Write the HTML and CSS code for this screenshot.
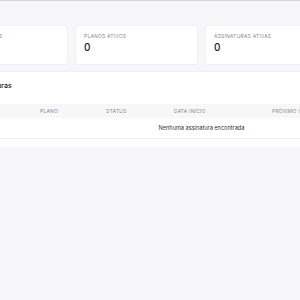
FILE: index.html
```html
<!DOCTYPE html>
<html>
<head>
<meta charset="utf-8">
<link rel="stylesheet" href="styles.css">
</head>
<body>
	<div class="page">
		<div class="stats">
			<div class="card">
				<div class="label">Total de planos</div>
				<div class="value">0</div>
			</div>
			<div class="card">
				<div class="label">Planos ativos</div>
				<div class="value">0</div>
			</div>
			<div class="card">
				<div class="label">Assinaturas ativas</div>
				<div class="value">0</div>
			</div>
			<div class="card">
				<div class="label">Receita mensal</div>
				<div class="value">R$ 0,00</div>
			</div>
		</div>

		<div class="panel">
			<h3 class="panel-title">Suas Assinaturas</h3>
			<table class="subs">
				<colgroup>
					<col style="width: 86px">
					<col style="width: 66px">
					<col style="width: 68px">
					<col style="width: 98px">
					<col style="width: 110px">
					<col>
				</colgroup>
				<thead>
					<tr>
						<th>Cliente</th>
						<th>Plano</th>
						<th>Status</th>
						<th>Data início</th>
						<th>Próximo vencimento</th>
						<th>Ações</th>
					</tr>
				</thead>
				<tbody>
					<tr>
						<td class="empty" colspan="6">Nenhuma assinatura encontrada</td>
					</tr>
				</tbody>
			</table>
		</div>
	</div>
</body>
</html>
```

FILE: styles.css
```css
body {
	margin: 0;
	background-color: #f7f7fa;
	border-top: 1px solid #d6d6de;
	font-family: Inter, "Noto Sans", sans-serif;
	color: #222;
}
.page {
	margin-left: -54px;
	width: 511px;
	padding-top: 25px;
}
.stats {
	display: grid;
	grid-template-columns: repeat(4, 121px);
	gap: 9px;
}
.card {
	background-color: #FFF;
	border-radius: 3px;
	box-shadow: 0 0 0 1px #f0f0f4;
	padding: 7px 8px 10px;
}
.card .label {
	color: #8a8a98;
	font-size: 5px;
	line-height: 7px;
	letter-spacing: 0.2px;
	text-transform: uppercase;
}
.card .value {
	font-size: 10px;
	font-weight: 500;
	line-height: 14px;
}
.panel {
	background-color: #FFF;
	border-radius: 3px;
	box-shadow: 0 0 0 1px #f0f0f4;
	margin-top: 8px;
	padding-bottom: 8px;
}
.panel-title {
	margin: 0;
	padding: 9px 8px 14px;
	font-size: 7px;
	font-weight: 500;
	line-height: 9px;
}
.subs {
	width: 100%;
	border-collapse: collapse;
	table-layout: fixed;
}
.subs th {
	background-color: #f7f7fa;
	color: #8a8a98;
	font-size: 5px;
	font-weight: normal;
	letter-spacing: 0.2px;
	line-height: 6px;
	padding: 4px 8px;
	text-align: left;
	text-transform: uppercase;
}
.subs td {
	border-bottom: 1px solid #f0f0f4;
	font-size: 5.6px;
	line-height: 8px;
	padding: 6px 8px;
	color: #333;
}
.subs td.empty {
	text-align: center;
}
```
